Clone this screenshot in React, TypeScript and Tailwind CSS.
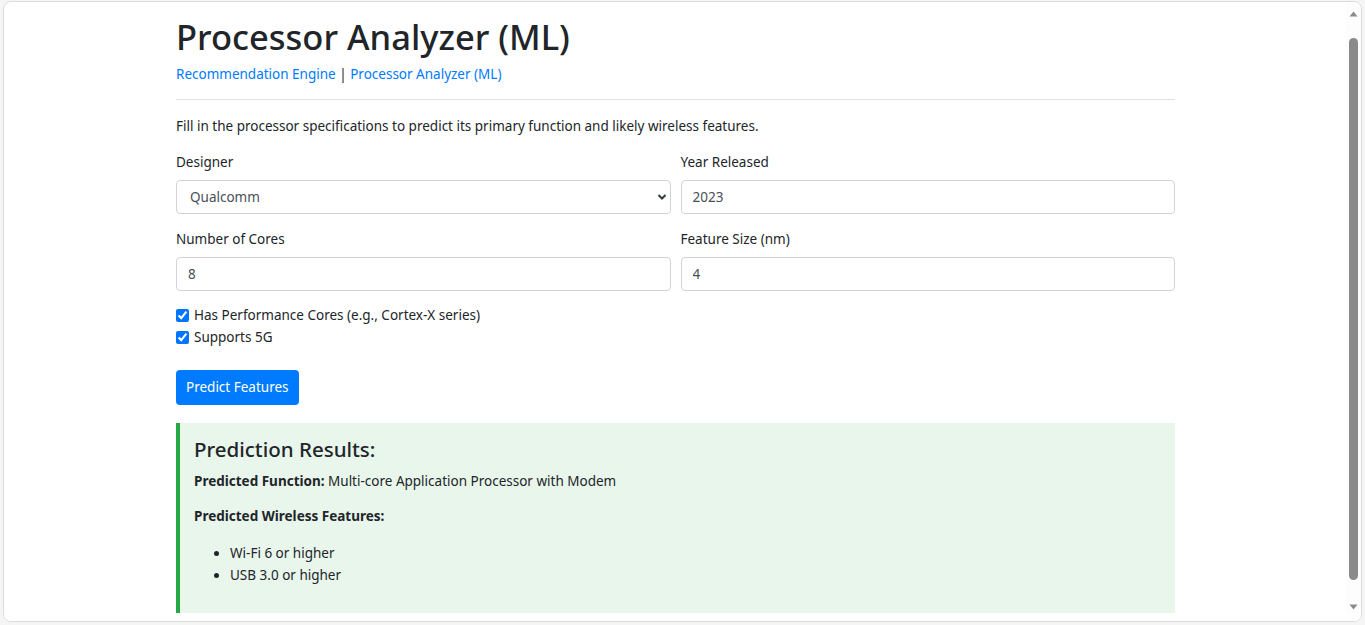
import React from "react";

const font = { fontFamily: '"Segoe UI", "Noto Sans", "Liberation Sans", sans-serif' };

function Field({ label, children }: { label: string; children: React.ReactNode }) {
  return (
    <div className="flex flex-col">
      <label className="text-[13.5px] leading-[21px] text-[#212529] mb-[7px]">{label}</label>
      {children}
    </div>
  );
}

function TextInput({ value }: { value: string }) {
  return (
    <input
      readOnly
      value={value}
      className="h-[34px] w-full rounded-[4px] border border-[#ced4da] bg-white px-[11px] text-[13.5px] text-[#495057] outline-none"
    />
  );
}

export default function App() {
  return (
    <div className="h-[625px] w-[1365px] overflow-hidden bg-[#f5f5f5] pl-[3px] pr-[3px] pt-[1px] pb-[3px]" style={font}>
      <div className="flex h-full flex-col overflow-hidden rounded-[8px] border border-[#dcdcdc] bg-white">
        <div className="flex min-h-0 flex-1">
          <div className="min-w-0 flex-1 overflow-hidden pl-[1px]">
            <div className="mx-auto w-[999px] pt-[13px] text-[#212529]">
              <h1 className="text-[34.5px] font-medium leading-[43px] text-[#212529]">Processor Analyzer (ML)</h1>
              <div className="mt-[6px] text-[13.5px] leading-[21px]">
                <a className="text-[#007bff]">Recommendation Engine</a>
                <span className="text-[#212529]"> | </span>
                <a className="text-[#007bff]">Processor Analyzer (ML)</a>
              </div>
              <hr className="mt-[14px] border-0 border-t border-[#e0e0e0]" />
              <p className="mt-[16px] text-[13.5px] leading-[21px]">
                Fill in the processor specifications to predict its primary function and likely wireless features.
              </p>
              <div className="mt-[15px] grid grid-cols-2 gap-x-[10px] gap-y-[15px]">
                <Field label="Designer">
                  <div className="relative">
                    <select
                      className="h-[34px] w-full appearance-none rounded-[4px] border border-[#ced4da] bg-white px-[13px] text-[13.5px] text-[#495057] outline-none"
                      defaultValue="Qualcomm"
                    >
                      <option>Qualcomm</option>
                    </select>
                    <svg
                      className="pointer-events-none absolute right-[4px] top-[13px]"
                      width="10"
                      height="8"
                      viewBox="0 0 10 8"
                    >
                      <path d="M1.5 2 L5 5.5 L8.5 2" fill="none" stroke="#343a40" strokeWidth="2" />
                    </svg>
                  </div>
                </Field>
                <Field label="Year Released">
                  <TextInput value="2023" />
                </Field>
                <Field label="Number of Cores">
                  <TextInput value="8" />
                </Field>
                <Field label="Feature Size (nm)">
                  <TextInput value="4" />
                </Field>
              </div>
              <div className="mt-[13px] flex flex-col text-[13.5px] leading-[22px]">
                <label className="flex items-center gap-[5px]">
                  <input type="checkbox" checked readOnly className="m-0 h-[13px] w-[13px]" />
                  <span>Has Performance Cores (e.g., Cortex-X series)</span>
                </label>
                <label className="flex items-center gap-[5px]">
                  <input type="checkbox" checked readOnly className="m-0 h-[13px] w-[13px]" />
                  <span>Supports 5G</span>
                </label>
              </div>
              <button className="mt-[22px] h-[35px] rounded-[4px] bg-[#007bff] px-[10px] text-[13.5px] text-white">
                Predict Features
              </button>
              <div className="mt-[18px] border-l-[4px] border-[#28a745] bg-[#e9f6ec] pl-[14px] pr-[15px] pt-[12px] pb-[20px]">
                <h3 className="text-[20.5px] font-medium leading-[28px]">Prediction Results:</h3>
                <p className="mt-[8px] text-[13.5px] leading-[21px]">
                  <strong className="font-bold">Predicted Function:</strong> Multi-core Application Processor with Modem
                </p>
                <p className="mt-[14px] text-[13.5px] leading-[21px] font-bold">Predicted Wireless Features:</p>
                <ul className="mt-[15px] list-disc pl-[36px] text-[13.5px] leading-[22px]">
                  <li>Wi-Fi 6 or higher</li>
                  <li>USB 3.0 or higher</li>
                </ul>
                <div className="h-[40px]" />
              </div>
            </div>
          </div>
          <div className="relative flex w-[15px] flex-col items-center bg-[#fdfdfd]">
            <svg className="mt-[9px]" width="9" height="6" viewBox="0 0 9 6">
              <path d="M0.5 5.5 L4.5 0.5 L8.5 5.5 Z" fill="#8a8a8a" />
            </svg>
            <div className="mt-[21px] h-[542px] w-[9px] rounded-[5px] bg-[#8a8a8a]" />
            <svg className="mt-auto mb-[3px]" width="9" height="6" viewBox="0 0 9 6">
              <path d="M0.5 0.5 L4.5 5.5 L8.5 0.5 Z" fill="#8a8a8a" />
            </svg>
          </div>
        </div>
        <div className="h-[8px] shrink-0 bg-white" />
      </div>
    </div>
  );
}
